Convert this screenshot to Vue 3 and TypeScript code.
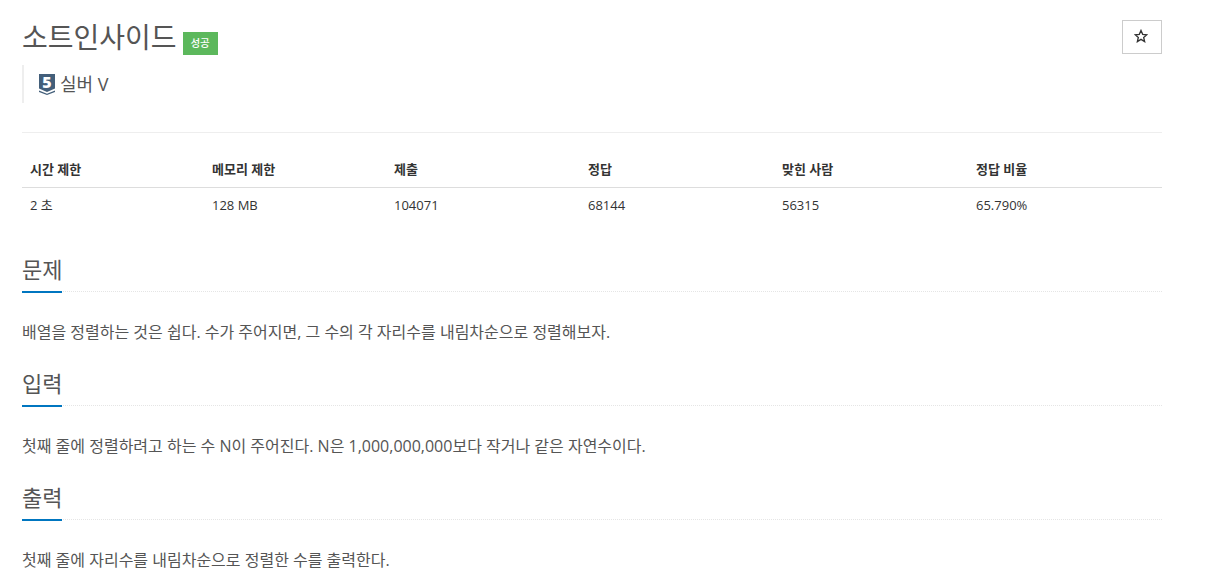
<script setup lang="ts">
const heads = ['시간 제한', '메모리 제한', '제출', '정답', '맞힌 사람', '정답 비율']
const values = ['2 초', '128 MB', '104071', '68144', '56315', '65.790%']
const widths = [182, 182, 194, 194, 194, 194]

const sections = [
  { title: '문제', body: '배열을 정렬하는 것은 쉽다. 수가 주어지면, 그 수의 각 자리수를 내림차순으로 정렬해보자.' },
  { title: '입력', body: '첫째 줄에 정렬하려고 하는 수 N이 주어진다. N은 1,000,000,000보다 작거나 같은 자연수이다.' },
  { title: '출력', body: '첫째 줄에 자리수를 내림차순으로 정렬한 수를 출력한다.' },
]
</script>

<template>
  <div class="page">
    <div class="page-header">
      <div class="title-row">
        <h1 class="title">
          <span>소트인사이드</span>
          <span class="label">성공</span>
        </h1>
        <button class="star-btn" type="button" aria-label="즐겨찾기">
          <svg width="14" height="14" viewBox="0 0 24 24" fill="none" stroke="#333" stroke-width="2.3" stroke-linejoin="miter">
            <path d="M12 2.5l2.9 6.6 7.1.7-5.4 4.7 1.6 7-6.2-3.7-6.2 3.7 1.6-7L2 9.8l7.1-.7z" />
          </svg>
        </button>
      </div>
      <blockquote class="tier">
        <span class="tier-icon">
          <svg width="18" height="22" viewBox="0 0 18 22">
            <path d="M1 1h16v14.5l-8 3.5-8-3.5z" fill="#435f7a" />
            <path d="M1 17.4l8 3.4 8-3.4v1.6l-8 3-8-3z" fill="#435f7a" />
          </svg>
          <span class="tier-num">5</span>
        </span>
        <span>실버 V</span>
      </blockquote>
    </div>

    <table class="info">
      <colgroup>
        <col v-for="(w, i) in widths" :key="i" :style="{ width: w + 'px' }" />
      </colgroup>
      <thead>
        <tr>
          <th v-for="h in heads" :key="h">{{ h }}</th>
        </tr>
      </thead>
      <tbody>
        <tr>
          <td v-for="v in values" :key="v">{{ v }}</td>
        </tr>
      </tbody>
    </table>

    <section v-for="s in sections" :key="s.title" class="section">
      <div class="headline">
        <h2>{{ s.title }}</h2>
      </div>
      <p class="body">{{ s.body }}</p>
    </section>
  </div>
</template>

<style scoped>
.page {
  width: 1140px;
  margin-left: 22px;
  color: #555;
  font-family: "Open Sans", "Noto Sans CJK KR", sans-serif;
  font-size: 14px;
  line-height: 20px;
}

.page-header {
  padding-bottom: 29px;
  border-bottom: 1px solid #eee;
  margin-bottom: 19px;
}

.title-row {
  display: flex;
  justify-content: space-between;
  align-items: flex-start;
  padding-top: 20px;
}

.title {
  margin: 0;
  display: flex;
  align-items: flex-end;
  gap: 6px;
  font-size: 28px;
  font-weight: 400;
  line-height: 34px;
  color: #555;
}

.label {
  display: block;
  width: 35px;
  height: 23px;
  margin-bottom: -1px;
  background: #5cb85c;
  color: #fff;
  font-size: 10.5px;
  font-weight: 500;
  line-height: 23px;
  text-align: center;
}

.star-btn {
  width: 40px;
  height: 34px;
  padding: 0 2px 2px 0;
  display: flex;
  align-items: center;
  justify-content: center;
  background: #fff;
  border: 1px solid #ccc;
}

.tier {
  margin: 11px 0 0;
  height: 38px;
  padding-left: 14px;
  border-left: 2px solid #eee;
  display: flex;
  align-items: center;
  gap: 4px;
  font-size: 18px;
  color: #555;
}

.tier-icon {
  position: relative;
  display: block;
  width: 18px;
  height: 22px;
}

.tier-icon svg {
  display: block;
}

.tier-num {
  position: absolute;
  top: 0;
  left: 0;
  width: 18px;
  color: #fff;
  font-family: "Open Sans", sans-serif;
  font-size: 16px;
  font-weight: 800;
  line-height: 18px;
  text-align: center;
}

.info {
  width: 1140px;
  table-layout: fixed;
  border-collapse: collapse;
  color: #333;
  font-size: 13px;
}

.info th {
  padding: 8px;
  text-align: left;
  font-weight: 700;
  line-height: 19px;
  border-bottom: 1px solid #ddd;
}

.info td {
  padding: 8px;
  line-height: 19px;
}

.info + .section {
  margin-top: 30px;
}

.headline {
  display: flex;
  border-bottom: 1px dotted #e5e5e5;
  margin-bottom: 29px;
}

.headline h2 {
  margin: 0 0 -2px;
  font-size: 22px;
  font-weight: 400;
  line-height: 32px;
  padding-bottom: 6px;
  border-bottom: 2px solid #0076c0;
  color: #555;
  min-width: 40px;
}

.body {
  margin: 0 0 24px;
  font-size: 16px;
  line-height: 22px;
  color: #555;
}
</style>
